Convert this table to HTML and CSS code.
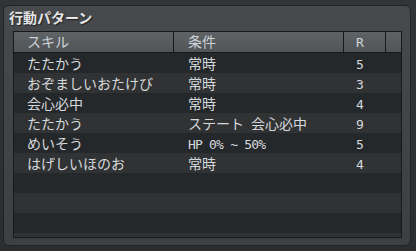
FILE: index.html
```html
<!DOCTYPE html>
<html lang="ja">
<head>
<meta charset="utf-8">
<link rel="stylesheet" href="styles.css">
</head>
<body>
<div class="panel">
  <div class="title">行動パターン</div>
  <div class="table">
    <div class="head">
      <div class="c1">スキル</div>
      <div class="c2">条件</div>
      <div class="c3"><span class="lat">R</span></div>
      <div class="c4"></div>
    </div>
    <div class="row dark"><div class="c1">たたかう</div><div class="c2">常時</div><div class="c3"><span class="lat">5</span></div></div>
    <div class="row light"><div class="c1">おぞましいおたけび</div><div class="c2">常時</div><div class="c3"><span class="lat">3</span></div></div>
    <div class="row dark"><div class="c1">会心必中</div><div class="c2">常時</div><div class="c3"><span class="lat">4</span></div></div>
    <div class="row light"><div class="c1">たたかう</div><div class="c2">ステート<span class="lat"> </span>会心必中</div><div class="c3"><span class="lat">9</span></div></div>
    <div class="row dark"><div class="c1">めいそう</div><div class="c2"><span class="lat">HP 0% ~ 50%</span></div><div class="c3"><span class="lat">5</span></div></div>
    <div class="row light"><div class="c1">はげしいほのお</div><div class="c2">常時</div><div class="c3"><span class="lat">4</span></div></div>
    <div class="row dark"></div>
    <div class="row light"></div>
    <div class="row dark"></div>
    <div class="row light"></div>
  </div>
</div>
</body>
</html>
```
FILE: styles.css
```css
html, body {
  margin: 0;
  padding: 0;
}
body {
  width: 416px;
  height: 251px;
  overflow: hidden;
  background: linear-gradient(#323537, #2b2e30);
  font-family: "Noto Sans CJK JP", sans-serif;
  font-size: 14px;
  color: #d6d9dc;
}
.panel {
  box-sizing: border-box;
  margin: 5px 5px 0 3px;
  width: 408px;
  height: 241px;
  border: 1px solid #222527;
  border-radius: 6px;
  background: linear-gradient(#47494c, #3c4043);
  padding: 0 8px 7px 9px;
  display: flex;
  flex-direction: column;
}
.title {
  height: 25px;
  line-height: 16px;
  padding-top: 3px;
  margin-left: -4px;
  box-sizing: border-box;
  font-weight: bold;
  color: #e6e6e6;
  text-shadow: 1px 1px 1px #1e2022;
}
.table {
  flex: 1;
  border: 1px solid #17191b;
  overflow: hidden;
  background: #25282b;
}
.head {
  display: flex;
  height: 20px;
  line-height: 19px;
  background: linear-gradient(#5f6366, #515558);
  border-bottom: 1px solid #17191b;
  color: #cdd3d8;
}
.head > div {
  box-sizing: border-box;
  border-right: 1px solid #17191b;
}
.head > .c4 {
  border-right: none;
  flex: 1;
}
.c1 {
  width: 160px;
  padding-left: 13px;
  box-sizing: border-box;
  white-space: nowrap;
}
.c2 {
  width: 170px;
  padding-left: 14px;
  box-sizing: border-box;
  white-space: pre;
}
.c3 {
  width: 42px;
  padding-left: 12px;
  box-sizing: border-box;
}
.row {
  display: flex;
  height: 20px;
  line-height: 20px;
}
.dark {
  background: #25282b;
}
.light {
  background: #303234;
}
.lat {
  font-family: "DejaVu Sans Mono", monospace;
  font-size: 13px;
  letter-spacing: -0.8px;
}
```
